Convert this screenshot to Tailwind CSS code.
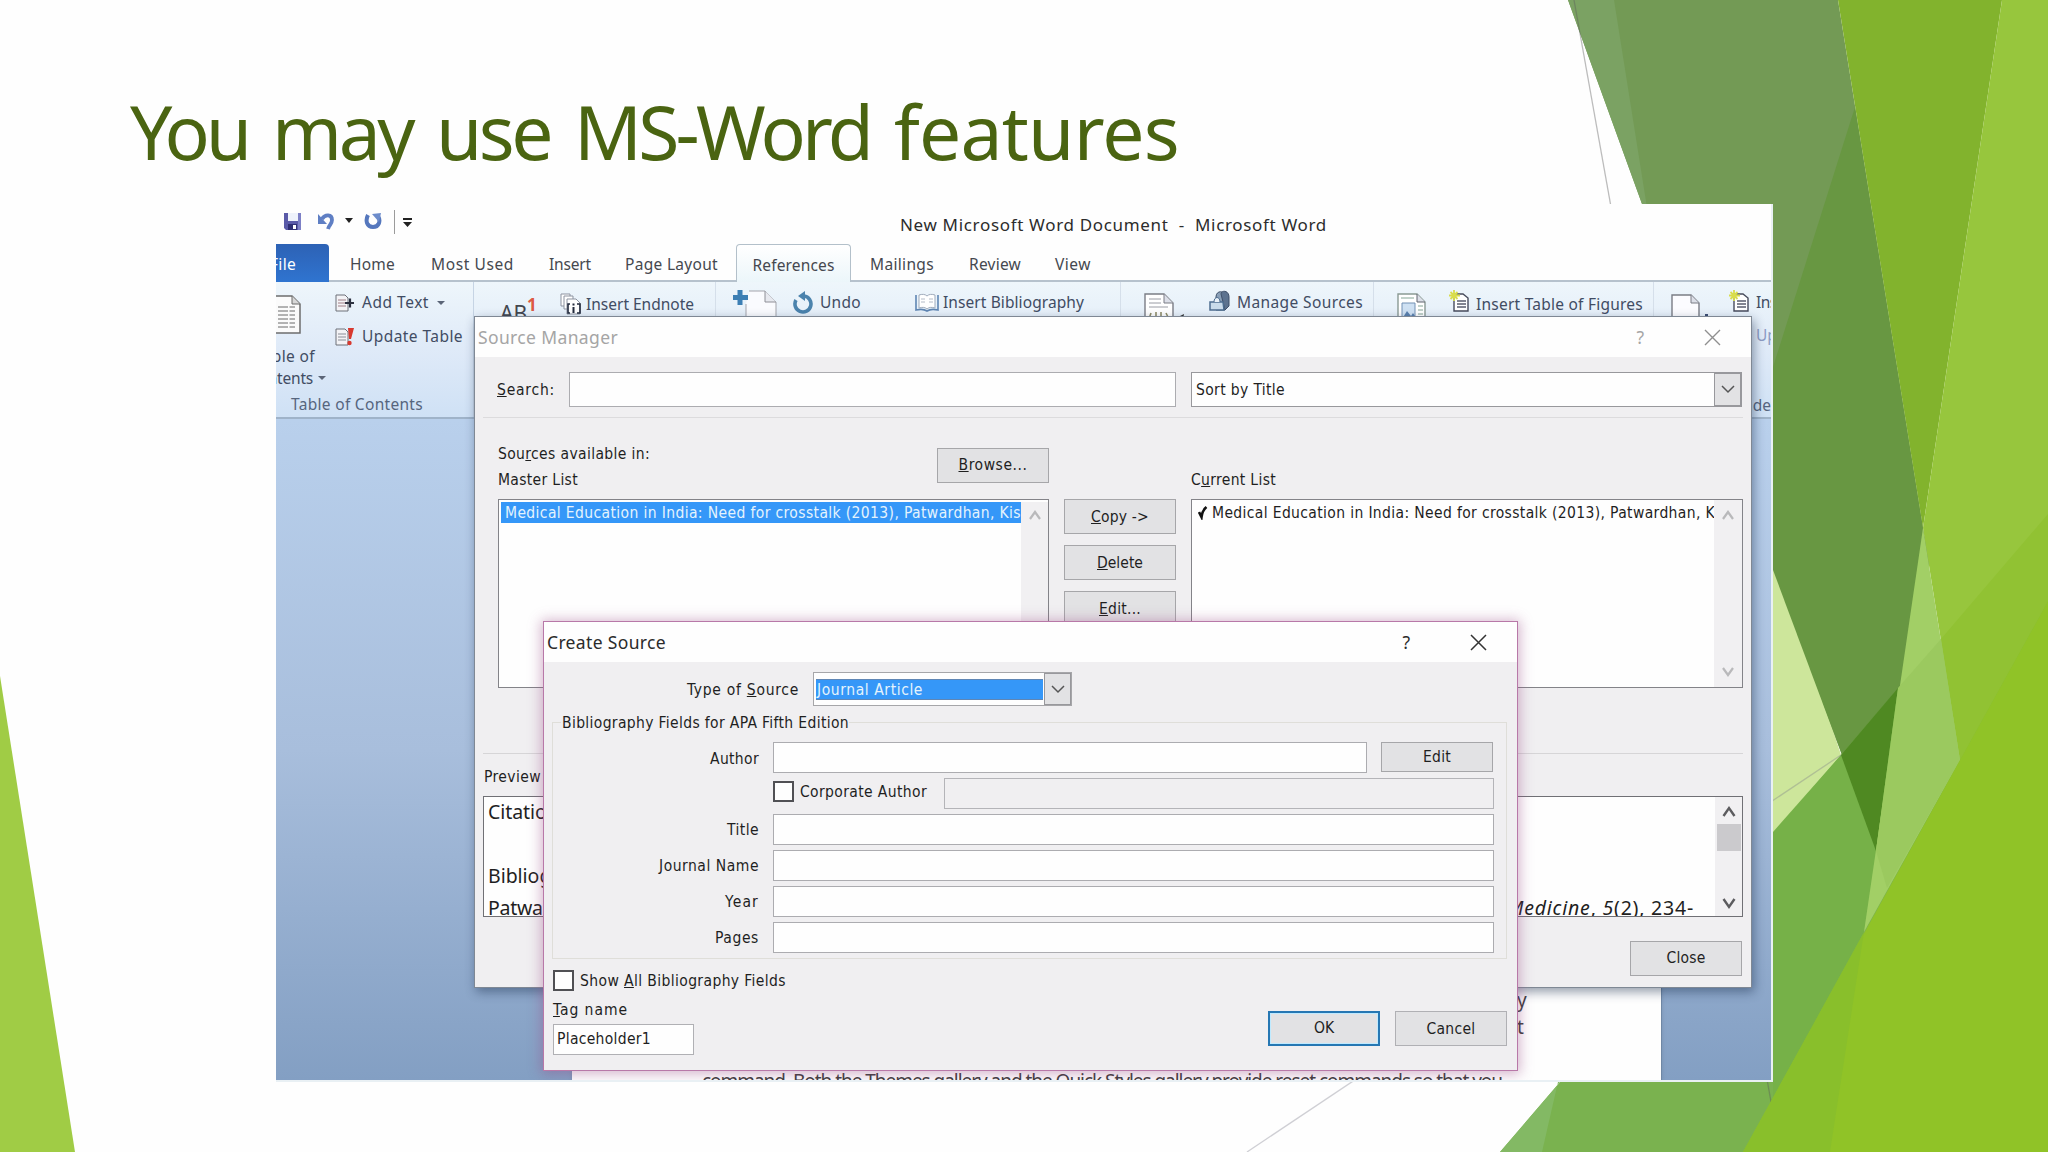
<!DOCTYPE html>
<html lang="en">
<head>
    <meta charset="UTF-8">
    <meta name="viewport" content="width=device-width, initial-scale=1.0">
    <script src="https://cdn.jsdelivr.net/npm/@tailwindcss/browser@4"></script>
    <title>You may use MS-Word features</title>
</head>
<body class="relative w-[2048px] h-[1152px] overflow-hidden bg-[#fefefe]">
    <!--backdrop-->
    <svg class="absolute inset-0" width="2048" height="1152" viewBox="0 0 2048 1152">
      <polygon points="0,676 0,1152 75,1152" fill="#a0cc45"/>
      <polygon points="1700,500 1760,500 1841,755 1700,950" fill="#cde69b"/>
      <polygon points="1568,0 1842,755 1876,851 1930,560 1923,528 1838,0" fill="#739a55"/>
      <polygon points="1568,0 1614,0 1648,214 1642,204" fill="#7ba263"/>
      <polygon points="1855,107 1923,528 1900,700 1842,755 1773,570 1773,367" fill="#689742"/>
      <polygon points="2048,514 1500,1152 2048,1152" fill="#7ab24f"/>
      <polygon points="1560,1082 1500,1152 1542,1152 1558,1082" fill="#83b964"/>
      <polygon points="1841,755 1773,832 1773,1098 1864,932 1876,851" fill="#76b148"/>
      <polygon points="1898,688 1841,755 1876,851" fill="#4f8922"/>
      <polygon points="1838,0 2002,0 1923,528" fill="#82b32d"/>
      <polygon points="2002,0 2048,0 2048,601 1960,760 1923,528" fill="#97c63d"/>
      <polygon points="1941,639 2048,514 2048,601 1960,760" fill="#91c233"/>
      <polygon points="1923,528 1960,760 1864,932" fill="#a2cf66"/>
      <polygon points="1941,639 1960,760 1887,888 1876,851 1898,688" fill="#9bc95f"/>
      <line x1="1574" y1="0" x2="1780" y2="1152" stroke="#5b5b5b" stroke-opacity=".4" stroke-width="1.3"/>
      <line x1="1841" y1="755" x2="1247" y2="1152" stroke="#777788" stroke-opacity=".35" stroke-width="1.3"/>
      <polygon points="2048,601 1743,1152 2048,1152" fill="#90c327"/>
      <polygon points="1864,932 1743,1152 1830,1152" fill="#89bf2b"/>
    </svg>
    <!--backdrop-->

    <h1 class="relative flex gap-[24px] pl-[130px] pt-[79px] h-[204px] whitespace-nowrap text-[75px] leading-[104px] text-[#4a6411] font-['Noto_Sans',sans-serif]">
      <span data-w="118">You</span>
      <span data-w="140">may</span>
      <span data-w="114">use</span>
      <span data-w="296">MS-Word</span>
      <span data-w="285">features</span>
    </h1>

    <!--word window-->
    <main class="relative ml-[276px] w-[1497px] h-[878px] overflow-hidden bg-white border-r-2 border-b-2 border-[#e9f0f4] text-[15.5px] text-[#45484f] whitespace-nowrap font-['Noto_Sans',sans-serif]">
      <header class="bg-[#fefefe]">
        <div class="flex h-[40px] items-start pt-[6px]">
          <svg class="ml-[7px] mt-[1px]" width="20" height="20" viewBox="0 0 20 20"><path d="M1 2h17v17H3l-2-2z" fill="#5a5aa8"/><path d="M5 2h10v8H5z" fill="#eef2fb"/><path d="M15 2h3v17h-3z" fill="#7d80c6"/><path d="M5 13h9v6H5z" fill="#2f2f74"/><path d="M10 14h3v4h-3z" fill="#fff"/></svg>
          <svg class="ml-[14px] mt-[2px]" width="20" height="20" viewBox="0 0 20 20"><path d="M5 7C8 2 15 2 15 8c0 4-3 5-4 9" fill="none" stroke="#5f7fc4" stroke-width="3.800"/><path d="M1 2v10h9z" fill="#5f7fc4"/></svg>
          <svg class="ml-[7px] mt-[8px]" width="10" height="6" viewBox="0 0 10 6"><path d="M1 0h8L5 5z" fill="#222"/></svg>
          <svg class="ml-[10px] mt-[2px]" width="20" height="20" viewBox="0 0 20 20"><path d="M4 3c-3 6-1 12 5 12s8-6 5-11" fill="none" stroke="#5577bd" stroke-width="4"/><path d="M8 2l9-1-2 9z" fill="#6d8ccb"/></svg>
          <div class="ml-[10px] w-px h-[24px] bg-[#9b9b9b]"></div>
          <svg class="ml-[7px] mt-[7px]" width="12" height="12" viewBox="0 0 12 12"><path d="M1 1h9v2H1zM1 5h9l-4.500 5z" fill="#222"/></svg>
          <span class="ml-[486px] leading-[30px] text-[17px] text-[#2c2c2c]" data-w="427">New Microsoft Word Document&nbsp; -&nbsp; Microsoft Word</span>
        </div>
        <!--tabs-->
        <nav class="relative flex h-[38px] border-b-2 border-[#b6c2cd] leading-[40px]">
          <div class="w-[53px] h-[38px] rounded-tr bg-linear-to-b from-[#2d62b5] to-[#2f74d0] text-white flex justify-end pr-[33px]"><span data-w="26">File</span></div>
          <a class="absolute left-[74px]" data-w="45">Home</a>
          <a class="absolute left-[155px]" data-w="83">Most Used</a>
          <a class="absolute left-[273px]" data-w="42">Insert</a>
          <a class="absolute left-[349px]" data-w="93">Page Layout</a>
          <div class="absolute left-[460px] w-[115px] h-[38px] flex justify-center border-x border-t border-[#b3c0ca] rounded-t bg-linear-to-b from-white to-[#ecf6fa]"><a data-w="82">References</a></div>
          <a class="absolute left-[594px]" data-w="64">Mailings</a>
          <a class="absolute left-[693px]" data-w="52">Review</a>
          <a class="absolute left-[779px]" data-w="36">View</a>
        </nav>
      </header>

      <!--ribbon-->
      <section class="flex h-[137px] border-b-2 border-[#9fb3c9] bg-linear-to-b from-[#eef6fb] via-[#dfeaf8] to-[#cfe1f5] text-[#414c63]">
        <div class="flex flex-col w-[198px] shrink-0 border-r border-[#c6d4e4] pt-[4px]">
          <div class="flex h-[104px]">
            <div class="w-[52px] shrink-0">
              <svg class="ml-[-8px] mt-[9px]" width="36" height="40" viewBox="0 0 36 40"><path d="M1 1h23l8 8v29H1z" fill="#fbfbfb" stroke="#6d6d6d" stroke-width="1.500"/><path d="M24 1v8h8" fill="#d7d7d7" stroke="#6d6d6d"/><path d="M10 12h17M10 16h17M10 20h17M10 24h17M10 28h17M10 32h17" stroke="#6b6b6b" stroke-dasharray="10 1.500"/></svg>
              <div class="flex justify-end w-[39px] leading-[22px] mt-[10px]"><span data-w="60">Table of</span></div>
              <div class="flex justify-end w-[50px] leading-[22px] gap-[5px] items-center"><span data-w="64">Contents</span><svg class="shrink-0" width="8" height="5" viewBox="0 0 8 5"><path d="M0 0h8L4 4z" fill="#5b6577"/></svg></div>
            </div>
            <div class="pl-[7px] flex flex-col">
              <div class="flex items-center h-[34px] gap-[6px]">
                <svg width="20" height="18" viewBox="0 0 20 18"><path d="M1 1h9l3 3v13H1z" fill="#f3f3f6" stroke="#6d7078"/><path d="M3 6h8M3 9h8M3 12h8" stroke="#a07f86"/><path d="M10 9h9M15 4.500v9" stroke="#2c3140" stroke-width="2.200"/></svg>
                <span class="ml-px" data-w="67">Add Text</span>
                <svg class="ml-[2px]" width="8" height="5" viewBox="0 0 8 5"><path d="M0 0h8L4 4z" fill="#5b6577"/></svg>
              </div>
              <div class="flex items-center h-[33px] gap-[6px]">
                <svg width="20" height="18" viewBox="0 0 20 18"><path d="M1 1h9l3 3v13H1z" fill="#f3f3f6" stroke="#6d7078"/><path d="M3 6h8M3 9h8M3 12h8" stroke="#8a8d96"/><path d="M13 0h6l-3 11h-2z" fill="#d8392f"/><circle cx="14.500" cy="15" r="2.200" fill="#d8392f"/></svg>
                <span class="ml-px" data-w="101">Update Table</span>
              </div>
            </div>
          </div>
          <span class="ml-[15px] leading-[31px] text-[#56657d]"><span data-w="132">Table of Contents</span></span>
        </div>
        <div class="flex w-[242px] shrink-0 border-r border-[#d5dfea]">
          <div class="ml-[26px] mt-[17px] flex items-start w-[60px] text-[21px] leading-[28px] text-[#44474f]"><span data-w="27">AB</span><span class="text-[17px] leading-[12px] font-bold text-[#dd5a44]">1</span></div>
          <svg class="mt-[11px]" width="22" height="22" viewBox="0 0 22 22"><path d="M1 1h9v12H1z" fill="#fff" stroke="#8d93a0"/><path d="M4 3h9v13H4z" fill="#fff" stroke="#8d93a0"/><path d="M7 6h9l4 4v11H7z" fill="#fff" stroke="#8d93a0"/><path d="M10 11h-2v9h2M17 11h3v9h-3" fill="none" stroke="#222a3c" stroke-width="1.600"/><path d="M13.500 14v6M13.500 10.500v2" stroke="#222a3c" stroke-width="2"/></svg>
          <span class="ml-[4px] mt-[10px] leading-[24px]" data-w="108">Insert Endnote</span>
        </div>
        <div class="flex w-[405px] shrink-0 border-r border-[#d5dfea]">
          <svg class="ml-[16px] mt-[7px]" width="48" height="36" viewBox="0 0 48 36"><path d="M17 2h16l11 11v23H14V15" fill="#fafbfe" stroke="#a3a4ab"/><path d="M33 2v11h11" fill="#e7e9ef" stroke="#8f9097"/><path d="M8 1v15M1 8.500h15" stroke="#3c7fb4" stroke-width="5"/></svg>
          <svg class="ml-[13px] mt-[9px]" width="22" height="23" viewBox="0 0 22 23"><path d="M3 9a8 8 0 1 0 8-4" fill="none" stroke="#4b83ad" stroke-width="3.600"/><path d="M12 0v10L5 5z" fill="#4b83ad"/></svg>
          <span class="ml-[5px] mt-[8px] leading-[24px]" data-w="41">Undo</span>
          <svg class="ml-[54px] mt-[9px]" width="24" height="22" viewBox="0 0 24 22"><path d="M1 4v15c4-1 8-1 11 1 3-2 7-2 11-1V4" fill="none" stroke="#5f86b3" stroke-width="1.600"/><path d="M4 4c3-1 6-1 8 1 2-2 5-2 8-1v13c-3-1-6-1-8 1-2-2-5-2-8-1z" fill="#fff" stroke="#9fabbb"/><path d="M6 8h4M6 11h4M14 8h4M14 11h4" stroke="#b4bcc8"/></svg>
          <span class="ml-[4px] mt-[8px] leading-[24px]" data-w="141">Insert Bibliography</span>
        </div>
        <div class="flex w-[253px] shrink-0 border-r border-[#d5dfea]">
          <svg class="ml-[23px] mt-[11px]" width="44" height="30" viewBox="0 0 44 30"><path d="M1 1h19l9 9v20H1z" fill="#fff" stroke="#7b7d85" stroke-width="1.400"/><path d="M20 1v9h9" fill="#dcdfe8" stroke="#7b7d85"/><path d="M5 6h12M5 10h12M5 14h19" stroke="#9a9ca4"/><path d="M7 20l-2 6M12 19v6M17 19v6M22 20l3 6" stroke="#8f8d6a" stroke-width="1.600"/><path d="M36 23l4-2-1 5z" fill="#333"/></svg>
          <svg class="ml-[21px] mt-[8px]" width="22" height="22" viewBox="0 0 22 22"><path d="M7 7c0-7 9-7 9 0v13H7z" fill="#8aa0b8" stroke="#3f5069"/><path d="M12 4c0-4 8-4 8 3v9l-4 4z" fill="#5d738f" stroke="#3f5069"/><path d="M1 12h13l1 8H1z" fill="#c9dbea" stroke="#4e6e90" stroke-width="1.500"/><path d="M5 12c0-6 6-6 6 0" fill="#e8f0f7" stroke="#4e6e90"/></svg>
          <span class="ml-[6px] mt-[8px] leading-[24px]" data-w="126">Manage Sources</span>
        </div>
        <div class="flex w-[280px] shrink-0 border-r border-[#d5dfea]">
          <svg class="ml-[23px] mt-[11px]" width="30" height="30" viewBox="0 0 30 30"><path d="M1 1h19l8 8v21H1z" fill="#fff" stroke="#8a9a94" stroke-width="1.400"/><path d="M20 1v8h8" fill="#dcdfe8" stroke="#61656e"/><path d="M4 5h13M21 13h5M21 17h5M21 21h5" stroke="#84a595"/><path d="M5 10h13v16H5z" fill="#cfe1f3" stroke="#7291b5"/><path d="M5 26l5-8 4 5 2-3 2 3v3z" fill="#5a80ae"/></svg>
          <svg class="ml-[22px] mt-[8px]" width="22" height="23" viewBox="0 0 22 23"><path d="M5 4h9l5 4v13H5z" fill="#fff" stroke="#474b5c" stroke-width="1.400"/><path d="M8 11h9M8 14h9M8 17h9" stroke="#5a5e6d" stroke-width="1.300"/><path d="M5 0v11M0 5.500h11M1.500 2l7 7M8.500 2l-7 7" stroke="#d9dd4c" stroke-width="1.800"/></svg>
          <span class="ml-[5px] mt-[10px] leading-[24px]" data-w="167">Insert Table of Figures</span>
        </div>
        <div class="flex grow">
          <svg class="ml-[17px] mt-[12px]" width="40" height="30" viewBox="0 0 40 30"><path d="M1 1h19l8 8v21H1z" fill="#fcfcff" stroke="#7b7d85" stroke-width="1.400"/><path d="M20 1v8h8" fill="#dcdfe8" stroke="#7b7d85"/><path d="M34 20h3v4h-3z" fill="#3d4e74"/></svg>
          <svg class="ml-[18px] mt-[8px]" width="22" height="23" viewBox="0 0 22 23"><path d="M5 4h9l5 4v13H5z" fill="#fff" stroke="#474b5c" stroke-width="1.400"/><path d="M8 11h9M8 14h9M8 17h9" stroke="#5a5e6d" stroke-width="1.300"/><path d="M5 0v11M0 5.500h11M1.500 2l7 7M8.500 2l-7 7" stroke="#d9dd4c" stroke-width="1.800"/></svg>
          <div class="flex flex-col ml-[5px] pt-[8px]">
            <span class="leading-[24px] tracking-[-0.5px]">Insert Index</span>
            <span class="leading-[24px] mt-[9px] text-[#8d9cc4]">Update Index</span>
            <span class="leading-[24px] mt-[46px] ml-[-18px] text-[#56657d]">Index</span>
          </div>
        </div>
      </section>

      <!--document-->
      <section class="h-[661px] pl-[296px] bg-linear-to-b from-[#b9d0ec] via-[#a8bedc] to-[#839fc3]">
        <div class="w-[1090px] h-full bg-[#fefefe] border-r border-[#6f87a5] text-[19px] text-[#3d3d3d] pt-[568px] shadow-md">
          <p class="pl-[945px] leading-[26px]">y</p>
          <p class="pl-[945px] leading-[28px]">t</p>
          <p class="pl-[130px] mt-[27px] leading-[26px]"><span data-w="800">command. Both the Themes gallery and the Quick Styles gallery provide reset commands so that you</span></p>
        </div>
      </section>

      <!--source manager-->
      <div class="absolute left-[198px] top-[112px] w-[1278px] h-[672px] border border-[#7f8894] bg-[#f0eff1] shadow-[2px_4px_10px_rgba(20,40,70,0.45)] text-[#1f1f1f] font-['DejaVu_Sans_Condensed','DejaVu_Sans',sans-serif]">
        <div class="flex items-center h-[40px] bg-[#fefefe] pl-[3px] text-[#a5a5a5] text-[17.5px] font-['Noto_Sans',sans-serif]">
          <span data-w="140">Source Manager</span>
          <span class="ml-auto">?</span>
          <svg class="ml-[60px] mr-[30px]" width="17" height="17" viewBox="0 0 17 17"><path d="M1 1l15 15M16 1L1 16" stroke="#8f8f8f" stroke-width="1.400"/></svg>
        </div>
        <div class="flex h-[35px] mt-[15px] pl-[22px]">
          <label class="w-[72px] leading-[36px]"><span data-w="58"><u>S</u>earch:</span></label>
          <div class="w-[607px] bg-[#fefefe] border border-[#acacb0]"></div>
          <div class="flex ml-[15px] w-[551px] bg-[#fefefe] border border-[#98989c] pl-[4px] leading-[34px]">
            <span data-w="89">Sort by Title</span>
            <div class="ml-auto w-[27px] border border-[#98989c] bg-[#e2e2e4] flex items-center justify-center"><svg width="14" height="9" viewBox="0 0 14 9"><path d="M1 1l6 6 6-6" fill="none" stroke="#555" stroke-width="1.500"/></svg></div>
          </div>
        </div>
        <div class="mt-[10px] mx-[8px] h-px bg-[#dcdbdd]"></div>

        <div class="flex pl-[23px] h-[270px]">
          <div class="w-[551px]">
            <div class="flex justify-between h-[81px]">
              <div class="pt-[24px]">
                <div class="h-[25px] leading-[24px]"><span data-w="152">Sou<u>r</u>ces available in:</span></div>
                <div class="h-[24px] leading-[26px]"><span data-w="80">Master List</span></div>
              </div>
              <button class="mt-[30px] h-[35px] w-[112px] pt-px border border-[#a6a6a9] bg-[#e2e2e4]"><span data-w="69"><u>B</u>rowse...</span></button>
            </div>
            <div class="flex h-[189px] border border-[#838388] bg-[#fefefe] pl-[2px] pt-[2px]">
              <div class="w-[520px] h-[21px] pl-[4px] overflow-hidden bg-[#3597f8] text-[#e4f3fd] leading-[22px]"><span data-w="516">Medical Education in India: Need for crosstalk (2013), Patwardhan, Kis</span></div>
              <div class="grow flex justify-center bg-[#f1f0f2] pt-[8px]"><svg width="12" height="10" viewBox="0 0 12 10"><path d="M1 9l5-7 5 7" fill="none" stroke="#b9b9bb" stroke-width="2.200"/></svg></div>
            </div>
          </div>
          <div class="flex flex-col ml-[15px] w-[112px] pt-[81px] gap-[11px]">
            <button class="h-[35px] pt-[2px] border border-[#a6a6a9] bg-[#e2e2e4]"><span data-w="58"><u>C</u>opy -&gt;</span></button>
            <button class="h-[35px] pt-[2px] border border-[#a6a6a9] bg-[#e2e2e4]"><span data-w="46"><u>D</u>elete</span></button>
            <button class="h-[35px] pt-[2px] border border-[#a6a6a9] bg-[#e2e2e4]"><span data-w="42"><u>E</u>dit...</span></button>
          </div>
          <div class="ml-[15px] w-[552px]">
            <div class="h-[81px] pt-[49px] leading-[26px]"><span data-w="85">C<u>u</u>rrent List</span></div>
            <div class="flex h-[189px] border border-[#838388] bg-[#fefefe]">
              <div class="flex w-[522px] pl-[6px] pt-[2px] overflow-hidden leading-[22px]">
                <svg class="shrink-0 mt-[3px]" width="10" height="15" viewBox="0 0 10 15"><path d="M1 7l2.500 5C4 8 6 4 8.500 2" fill="none" stroke="#111" stroke-width="2.600"/></svg>
                <span class="ml-[4px]" data-w="503">Medical Education in India: Need for crosstalk (2013), Patwardhan, K</span>
              </div>
              <div class="grow flex flex-col justify-between items-center bg-[#f1f0f2] py-[10px]">
                <svg width="12" height="10" viewBox="0 0 12 10"><path d="M1 9l5-7 5 7" fill="none" stroke="#b9b9bb" stroke-width="2.200"/></svg>
                <svg width="12" height="10" viewBox="0 0 12 10"><path d="M1 1l5 7 5-7" fill="none" stroke="#b9b9bb" stroke-width="2.200"/></svg>
              </div>
            </div>
          </div>
        </div>

        <div class="mt-[65px] mx-[8px] h-px bg-[#d6d5d7]"></div>
        <div class="h-[42px] pl-[9px] leading-[46px]"><span data-w="57">Preview</span></div>
        <div class="flex ml-[8px] w-[1260px] h-[121px] overflow-hidden border border-[#707075] bg-[#fefefe]">
          <div class="grow mt-[-1px] pl-[4px] leading-8 text-[19.5px] font-['Noto_Sans',sans-serif]">
            <p><span data-w="76">Citation:</span></p>
            <p>&nbsp;</p>
            <p><span data-w="121">Bibliography:</span></p>
            <p class="flex justify-between pr-[21px]"><span data-w="108">Patwardhan</span><span data-w="187"><i>Medicine</i>, <i>5</i>(2), 234-</span></p>
          </div>
          <div class="w-[27px] bg-[#f1f0f2] flex flex-col items-center pt-[8px]">
            <svg width="14" height="12" viewBox="0 0 14 12"><path d="M1.500 11l5.500-8 5.500 8" fill="none" stroke="#5c5c5f" stroke-width="2.400"/></svg>
            <div class="w-[24px] h-[27px] mt-[7px] bg-[#cbcacd]"></div>
            <svg class="mt-[47px]" width="14" height="12" viewBox="0 0 14 12"><path d="M1.500 1l5.500 8 5.500-8" fill="none" stroke="#5c5c5f" stroke-width="2.400"/></svg>
          </div>
        </div>
        <div class="flex justify-end mt-[24px] pr-[9px]">
          <button class="h-[35px] w-[112px] pt-px border border-[#a6a6a9] bg-[#e2e2e4]"><span data-w="39">Close</span></button>
        </div>
      </div>

      <!--create source-->
      <div class="absolute left-[267px] top-[417px] w-[975px] h-[450px] border border-[#b878a8] bg-[#f0eff1] shadow-[0_1px_12px_2px_rgba(150,70,130,0.4)] text-[#1f1f1f] font-['DejaVu_Sans_Condensed','DejaVu_Sans',sans-serif]">
        <div class="flex items-center h-[40px] bg-[#fefefe] pl-[3px] text-[#2b2b2b] text-[17.5px] font-['Noto_Sans',sans-serif]">
          <span data-w="119">Create Source</span>
          <span class="ml-auto">?</span>
          <svg class="ml-[60px] mr-[30px]" width="17" height="17" viewBox="0 0 17 17"><path d="M1 1l15 15M16 1L1 16" stroke="#333" stroke-width="1.500"/></svg>
        </div>
        <div class="flex h-[34px] mt-[10px]">
          <label class="w-[255px] text-right leading-[36px]"><span data-w="112">Type of <u>S</u>ource</span></label>
          <div class="flex items-center ml-[14px] w-[259px] bg-[#fefefe] border border-[#a6a6a9] pl-[2px]">
            <div class="w-[227px] h-[21px] pl-[1px] bg-[#3597f8] border-y border-[#5f86b5] text-[#e4f3fd] leading-[20px]"><span data-w="106">Journal Article</span></div>
            <div class="ml-auto w-[27px] h-[32px] border border-[#98989c] bg-[#e2e2e4] flex items-center justify-center"><svg width="14" height="9" viewBox="0 0 14 9"><path d="M1 1l6 6 6-6" fill="none" stroke="#555" stroke-width="1.500"/></svg></div>
          </div>
        </div>
        <div class="ml-[8px] mt-[16px] w-[955px] h-[237px] border border-[#dfded9]">
          <div class="h-[19px]"><span class="relative top-[-11px] ml-[8px] pl-[1px] bg-[#f0eff1] leading-[22px]" data-w="288">Bibliography Fields for APA Fifth Edition</span></div>
          <div class="flex flex-col gap-[5px] text-right leading-[33px]">
            <div class="flex h-[31px]"><label class="w-[206px] leading-[34px]"><span data-w="49">Author</span></label><div class="ml-[14px] w-[594px] bg-[#fefefe] border border-[#acacb0]"></div><button class="ml-[14px] w-[112px] h-[30px] leading-[29px] border border-[#a6a6a9] bg-[#e2e2e4]"><span data-w="28">Edit</span></button></div>
            <div class="flex h-[31px]"><div class="ml-[220px] mt-[3px] w-[21px] h-[21px] border-2 border-[#505054] bg-[#fefefe]"></div><label class="ml-[6px] w-[144px] text-left leading-[28px]"><span data-w="127">Corporate Author</span></label><div class="w-[550px] border border-[#b4b4b8]"></div></div>
            <div class="flex h-[31px]"><label class="w-[206px]"><span data-w="32">Title</span></label><div class="ml-[14px] w-[721px] bg-[#fefefe] border border-[#acacb0]"></div></div>
            <div class="flex h-[31px]"><label class="w-[206px]"><span data-w="100">Journal Name</span></label><div class="ml-[14px] w-[721px] bg-[#fefefe] border border-[#acacb0]"></div></div>
            <div class="flex h-[31px]"><label class="w-[206px]"><span data-w="34">Year</span></label><div class="ml-[14px] w-[721px] bg-[#fefefe] border border-[#acacb0]"></div></div>
            <div class="flex h-[31px]"><label class="w-[206px]"><span data-w="44">Pages</span></label><div class="ml-[14px] w-[721px] bg-[#fefefe] border border-[#acacb0]"></div></div>
          </div>
        </div>
        <div class="flex items-center h-[21px] mt-[11px] pl-[9px] gap-[6px]">
          <div class="w-[21px] h-[21px] border-2 border-[#505054] bg-[#fefefe]"></div>
          <span class="pt-[2px]" data-w="206">Show <u>A</u>ll Bibliography Fields</span>
        </div>
        <div class="flex pl-[9px] pr-[10px]">
          <div>
            <div class="mt-[6px] leading-[26px]"><span data-w="75"><u>T</u>ag name</span></div>
            <div class="mt-[1px] w-[141px] h-[31px] border border-[#b0b0b4] bg-[#fefefe] pl-[3px] leading-[29px]"><span data-w="94">Placeholder1</span></div>
          </div>
          <button class="ml-auto mt-[20px] w-[112px] h-[35px] pt-px border-[2.500px] border-[#2677b3] bg-[#e2e2e4] shadow-[inset_0_0_0_1px_#bfeaff]"><span data-w="20">OK</span></button>
          <button class="ml-[15px] mt-[20px] w-[112px] h-[35px] pt-[2px] border border-[#b0b0b4] bg-[#e2e2e4]"><span data-w="49">Cancel</span></button>
        </div>
      </div>
    </main>
    <!--word window-->
</body>
<script>
  // Spread the letters so that each label takes its own width
  function fitLabels() {
    document.querySelectorAll('[data-w]').forEach(function (el) {
      el.style.letterSpacing = '0px';
      var w = el.getBoundingClientRect().width;
      el.style.letterSpacing = (el.dataset.w - w) / el.textContent.length + 'px';
    });
  }

  window.addEventListener('load', function () {
    fitLabels();
    document.fonts.ready.then(fitLabels);
    setTimeout(fitLabels, 50);
  });
</script>
</html>
